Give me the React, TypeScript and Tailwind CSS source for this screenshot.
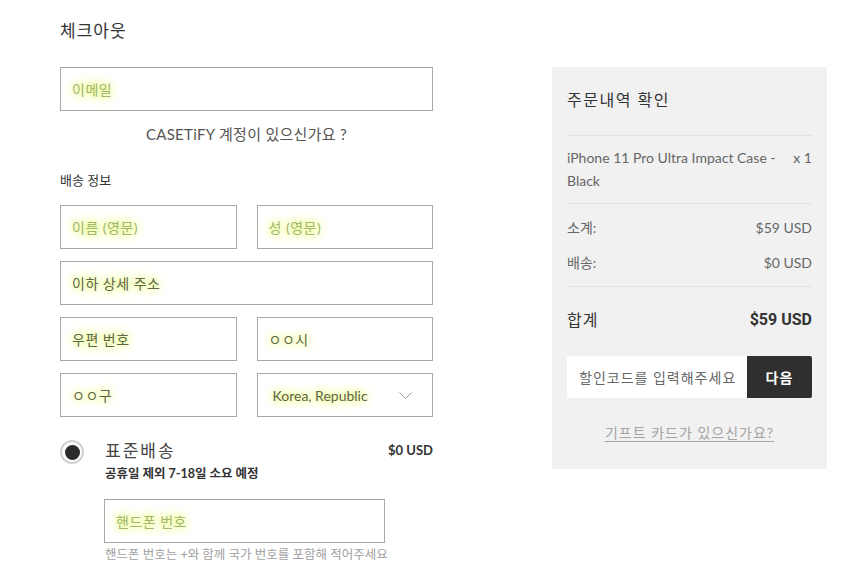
import React from 'react';

const glow = '[text-shadow:0_0_6px_#e2ff6a,0_0_12px_#eaff8c,0_0_16px_#f1ffb5]';

const Field = ({ label, dim = false, className = '' }: { label: string; dim?: boolean; className?: string }) => (
  <div className={`h-[44px] border border-[#a8a8a8] bg-white flex items-center px-[11px] ${className}`}>
    <span className={`text-[14px] tracking-[0.5px] ${dim ? 'text-[#a3b46c]' : 'text-[#5e6446]'} ${glow}`}>{label}</span>
  </div>
);

const App = () => {
  return (
    <div className="w-[852px] h-[562px] overflow-hidden bg-white font-['Lato','Noto_Sans_CJK_KR',sans-serif] text-[#333]">
      <div className="flex pl-[60px] gap-[119px]">
        {/* Left column - form */}
        <div className="w-[373px] flex flex-col">
          <div className="h-[67px] pt-[20px]">
            <h1 className="text-[17px] leading-[22px] font-normal text-[#333] tracking-[1px]">체크아웃</h1>
          </div>

          <Field label="이메일" dim />

          <p className="mt-[13px] text-center text-[15px] leading-[20px] text-[#555] tracking-[0.3px]">CASETiFY 계정이 있으신가요 ?</p>

          <p className="mt-[28px] text-[13px] leading-[16px] text-[#333]">배송 정보</p>

          <div className="mt-[17px] grid grid-cols-2 gap-x-[20px] gap-y-[12px]">
            <Field label="이름 (영문)" dim />
            <Field label="성 (영문)" dim />
            <Field label="이하 상세 주소" className="col-span-2" />
            <Field label="우편 번호" />
            <Field label="ㅇㅇ시" />
            <Field label="ㅇㅇ구" />
            <div className="h-[44px] border border-[#a8a8a8] bg-white flex items-center justify-between pl-[15px] pr-[20px]">
              <span className={`text-[14px] text-[#5e6446] ${glow}`}>Korea, Republic</span>
              <svg width="13" height="7" viewBox="0 0 13 7" fill="none" stroke="#999" strokeWidth="1">
                <path d="M0.5 0.5 L6.5 6.5 L12.5 0.5" />
              </svg>
            </div>
          </div>

          {/* Shipping option */}
          <div className="mt-[23px] flex items-start">
            <div className="w-[24px] h-[24px] rounded-full border-2 border-[#d2d2d2] flex items-center justify-center shrink-0">
              <div className="w-[15px] h-[15px] rounded-full bg-[#2b2b2b]" />
            </div>
            <div className="ml-[21px] flex-1">
              <div className="flex items-center justify-between h-[22px]">
                <span className="text-[17px] text-[#444] tracking-[2px]">표준배송</span>
                <span className="text-[13px] font-bold text-[#333]">$0 USD</span>
              </div>
              <p className="mt-[4px] text-[12.5px] leading-[16px] font-bold text-[#333]">공휴일 제외 7-18일 소요 예정</p>
              <div className="mt-[17px] w-[281px] -ml-[1px]">
                <Field label="핸드폰 번호" dim />
              </div>
              <p className="mt-[4px] text-[12.5px] leading-[16px] text-[#a0a0a0] whitespace-nowrap">핸드폰 번호는 +와 함께 국가 번호를 포함해 적어주세요</p>
            </div>
          </div>
        </div>

        {/* Right column - order summary */}
        <div className="mt-[67px] w-[275px] h-[402px] bg-[#f1f1f1] px-[15px] flex flex-col">
          <div className="pt-[22px] pb-[24px] border-b border-[#e2e2e2]">
            <h2 className="text-[16px] leading-[22px] font-normal text-[#333] tracking-[1.5px]">주문내역 확인</h2>
          </div>

          <div className="pt-[10px] pb-[11px] flex justify-between text-[14px] leading-[23px] text-[#666] border-b border-[#e2e2e2]">
            <span className="w-[225px]">iPhone 11 Pro Ultra Impact Case - Black</span>
            <span className="whitespace-nowrap">x 1</span>
          </div>

          <div className="pt-[12px] pb-[12px] border-b border-[#e2e2e2] flex flex-col gap-[12px] text-[14px] leading-[23px] text-[#666]">
            <div className="flex justify-between">
              <span>소계:</span>
              <span>$59 USD</span>
            </div>
            <div className="flex justify-between">
              <span>배송:</span>
              <span>$0 USD</span>
            </div>
          </div>

          <div className="mt-[21px] flex justify-between items-center h-[24px]">
            <span className="text-[16px] text-[#333] tracking-[1px]">합계</span>
            <span className="text-[16px] font-bold font-['Roboto',sans-serif] text-[#333]">$59 USD</span>
          </div>

          <div className="mt-[24px] flex h-[42px]">
            <div className="flex-1 bg-white flex items-center pl-[12px]">
              <span className="text-[14px] text-[#666] tracking-[1px]">할인코드를 입력해주세요</span>
            </div>
            <button className="w-[65px] bg-[#2f2f2f] text-white text-[14px] font-bold rounded-r-[2px] tracking-[1px]">다음</button>
          </div>

          <p className="mt-[25px] text-center text-[14px] leading-[20px] text-[#a3a3a3] underline underline-offset-[3px] tracking-[1px]">기프트 카드가 있으신가요?</p>
        </div>
      </div>
    </div>
  );
};

export default App;
